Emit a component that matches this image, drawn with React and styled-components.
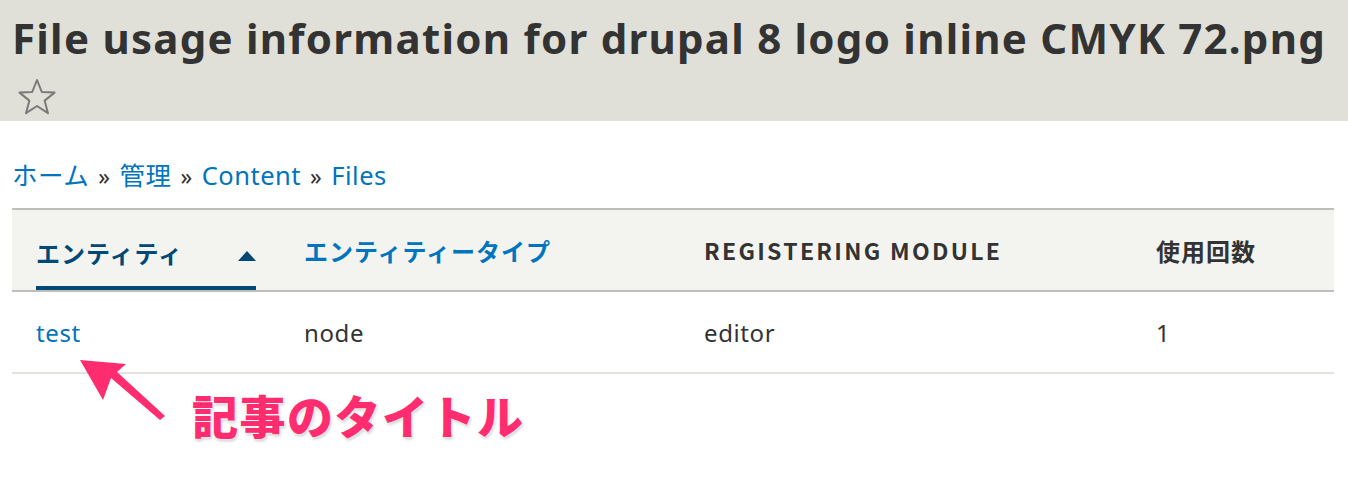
import React from "react";
import styled, { createGlobalStyle } from "styled-components";

const GlobalStyle = createGlobalStyle`
  html, body {
    margin: 0;
    padding: 0;
    background: #ffffff;
  }
  body {
    font-family: "Noto Sans", "Noto Sans CJK JP", sans-serif;
    color: #333333;
  }
`;

const columns = [
  { label: "エンティティ", kind: "active", width: 268, latin: false },
  { label: "エンティティータイプ", kind: "link", width: 400, latin: false },
  { label: "REGISTERING MODULE", kind: "plain", width: 452, latin: true },
  { label: "使用回数", kind: "plain", width: 202, latin: false },
];

const rows = [{ entity: "test", type: "node", module: "editor", count: "1" }];

export default function App() {
  return (
    <Page>
      <GlobalStyle />
      <Header>
        <Title>File usage information for drupal 8 logo inline CMYK 72.png</Title>
        <StarButton aria-label="shortcut">
          <svg width="40" height="38" viewBox="0 0 40 38">
            <path
              d="M20 2 L24.8 14 L37.5 14.6 L27.6 22.6 L31 35.2 L20 28 L9 35.2 L12.4 22.6 L2.5 14.6 L15.2 14 Z"
              fill="none"
              stroke="#7a7a78"
              strokeWidth="2"
              strokeLinejoin="round"
            />
          </svg>
        </StarButton>
      </Header>

      <Content>
        <Breadcrumb>
          <Crumb>ホーム</Crumb>
          <Sep>»</Sep>
          <Crumb>管理</Crumb>
          <Sep>»</Sep>
          <Crumb>Content</Crumb>
          <Sep>»</Sep>
          <Crumb>Files</Crumb>
        </Breadcrumb>

        <Table>
          <colgroup>
            {columns.map((c) => (
              <col key={c.label} style={{ width: c.width }} />
            ))}
          </colgroup>
          <thead>
            <HeadRow>
              {columns.map((c) => (
                <HeadCell key={c.label} $kind={c.kind} $latin={c.latin}>
                  {c.kind === "active" ? (
                    <ActiveHead>
                      {c.label}
                      <SortIcon />
                    </ActiveHead>
                  ) : (
                    c.label
                  )}
                </HeadCell>
              ))}
            </HeadRow>
          </thead>
          <tbody>
            {rows.map((r) => (
              <BodyRow key={r.entity}>
                <Cell>
                  <EntityLink>{r.entity}</EntityLink>
                </Cell>
                <Cell>{r.type}</Cell>
                <Cell>{r.module}</Cell>
                <Cell>{r.count}</Cell>
              </BodyRow>
            ))}
          </tbody>
        </Table>
      </Content>

      <Annotation>
        <svg width="110" height="80" viewBox="0 0 110 80">
          <path d="M20 10 L66 14 L57 22 L105 66 L100 70 L51 28 L43 50 Z" fill="#ff2d6f" />
        </svg>
        <Note>記事のタイトル</Note>
      </Annotation>
    </Page>
  );
}

const Page = styled.div`
  position: relative;
  width: 1348px;
  height: 498px;
  overflow: hidden;
`;

const Header = styled.header`
  background: #e0e0d8;
  height: 121px;
  padding: 12px 12px 0;
  box-sizing: border-box;
`;

const Title = styled.h1`
  margin: 0;
  font-size: 42px;
  line-height: 52px;
  font-weight: 700;
  color: #333333;
  letter-spacing: 1.25px;
  white-space: nowrap;
`;

const StarButton = styled.div`
  width: 40px;
  height: 38px;
  margin: 14px 0 0 5px;
`;

const Content = styled.main`
  padding: 37px 12px 0;
`;

const Breadcrumb = styled.nav`
  display: flex;
  align-items: baseline;
  gap: 9px;
  font-size: 25.5px;
  line-height: 34px;
  margin-bottom: 15px;
  letter-spacing: 0.5px;
`;

const Crumb = styled.a`
  color: #0074bd;
  text-decoration: none;
`;

const Sep = styled.span`
  color: #333333;
  font-size: 23px;
`;

const Table = styled.table`
  width: 1322px;
  table-layout: fixed;
  border-collapse: collapse;
  border-top: 2px solid #bfbfba;
`;

const HeadRow = styled.tr`
  background: #f3f4ef;
  border-bottom: 2px solid #bfbfba;
`;

const HeadCell = styled.th`
  height: 80px;
  padding: 0 0 0 24px;
  text-align: left;
  vertical-align: middle;
  white-space: nowrap;
  font-family: "Noto Sans CJK JP", "Noto Sans", sans-serif;
  font-size: ${({ $latin }) => ($latin ? "23px" : "24px")};
  letter-spacing: ${({ $latin }) => ($latin ? "2.3px" : "1px")};
  font-weight: 700;
  color: ${({ $kind }) =>
    $kind === "active" ? "#004875" : $kind === "link" ? "#0074bd" : "#333333"};
  &:first-child {
    vertical-align: bottom;
  }
`;

const ActiveHead = styled.div`
  position: relative;
  display: flex;
  align-items: center;
  width: 220px;
  height: 76px;
  padding-top: 4px;
  box-sizing: border-box;
  border-bottom: 4px solid #004875;
`;

const SortIcon = styled.span`
  position: absolute;
  right: 0;
  top: 37px;
  width: 0;
  height: 0;
  border-left: 9px solid transparent;
  border-right: 9px solid transparent;
  border-bottom: 10px solid #004875;
`;

const BodyRow = styled.tr`
  border-bottom: 2px solid #e4e3de;
`;

const Cell = styled.td`
  height: 80px;
  padding: 0 0 0 24px;
  font-size: 24px;
  letter-spacing: 0.6px;
  color: #333333;
  vertical-align: middle;
`;

const EntityLink = styled.a`
  color: #0074bd;
  text-decoration: none;
`;

const Annotation = styled.div`
  position: absolute;
  left: 60px;
  top: 350px;
  display: flex;
  align-items: flex-start;
  svg {
    flex: none;
  }
`;

const Note = styled.div`
  margin: 34px 0 0 22px;
  font-family: "Noto Sans CJK JP", sans-serif;
  font-size: 46px;
  font-weight: 900;
  line-height: 60px;
  color: #ff2d6f;
  letter-spacing: 1.5px;
  text-shadow: 0 0 3px #fff, 0 0 3px #fff, 1px 2px 3px rgba(0, 0, 0, 0.25);
`;
